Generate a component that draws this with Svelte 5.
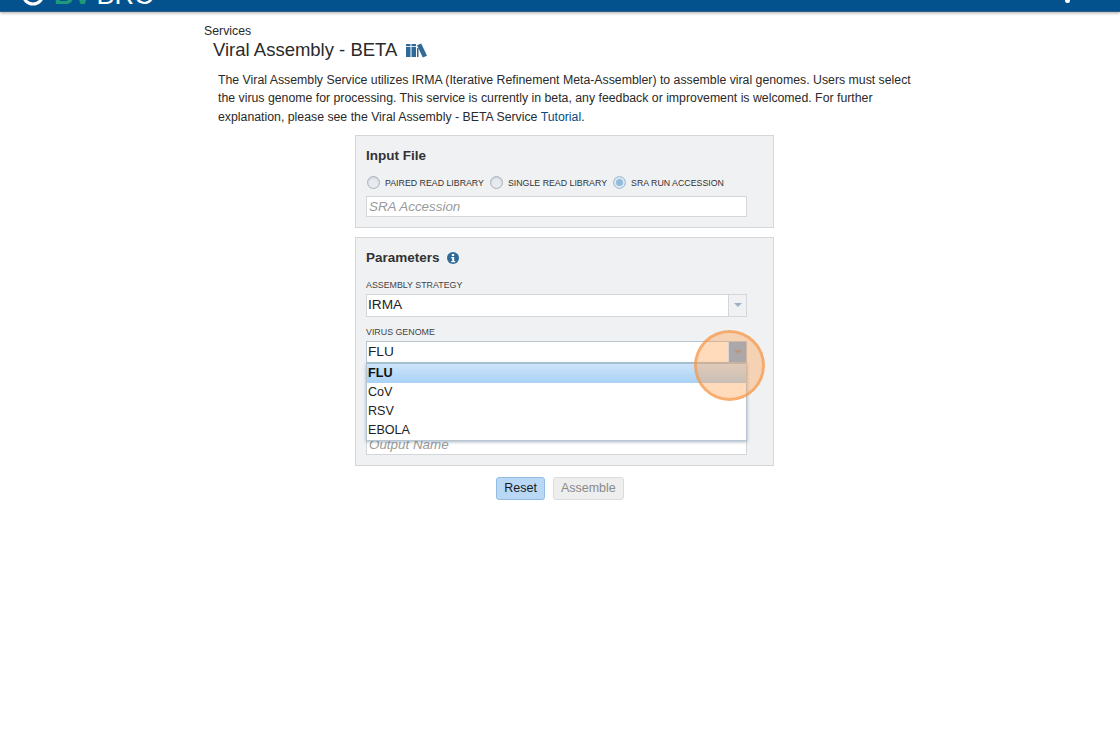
<script lang="ts">
	const radios = [
		{ label: 'PAIRED READ LIBRARY', checked: false },
		{ label: 'SINGLE READ LIBRARY', checked: false },
		{ label: 'SRA RUN ACCESSION', checked: true }
	];
	const genomes = ['FLU', 'CoV', 'RSV', 'EBOLA'];
</script>

<header class="topbar">
	<div class="logo">
		<svg class="logo-mark" width="26" height="26" viewBox="0 0 26 26">
			<circle cx="13" cy="13" r="10" fill="none" stroke="#fff" stroke-width="3" />
		</svg>
		<span class="logo-bv">BV</span>
		<span class="logo-brc">BRC</span>
	</div>
	<span class="user-dot"></span>
</header>

<main class="page">
	<div class="crumb">Services</div>
	<h1>
		Viral Assembly - BETA
		<svg class="books" width="21" height="15" viewBox="0 0 21 15">
			<path d="M0 1h4.500v13H0zM5.500 1H10v13H5.500z" fill="#2f6a98" />
			<path d="M11 2.200l4.200-1.700L21 12.800l-4.200 1.700z" fill="#2f6a98" />
			<path d="M11 5h1.500v9H11z" fill="#2f6a98" />
			<path d="M0 3.500h10" stroke="#fff" stroke-width="0.800" />
		</svg>
	</h1>
	<p class="intro">
		The Viral Assembly Service utilizes IRMA (Iterative Refinement Meta-Assembler) to assemble viral
		genomes. Users must select the virus genome for processing. This service is currently in beta,
		any feedback or improvement is welcomed. For further explanation, please see the Viral Assembly
		- BETA Service <span class="link">Tutorial</span>.
	</p>

	<div class="form">
		<section class="panel input-panel">
			<h2>Input File</h2>
			<div class="radios">
				{#each radios as radio}
					<span class="radio" class:checked={radio.checked}></span>
					<span class="radio-label">{radio.label}</span>
				{/each}
			</div>
			<div class="field placeholder">SRA Accession</div>
		</section>

		<section class="panel params">
			<h2>
				Parameters
				<svg class="info" width="12" height="12" viewBox="0 0 12 12">
					<circle cx="6" cy="6" r="6" fill="#2f6a98" />
					<rect x="4.800" y="2" width="2.400" height="2" fill="#fff" />
					<path d="M4.200 5h3v4h1v1.200H4.200V9h1V6.200h-1z" fill="#fff" />
				</svg>
			</h2>

			<div class="label first">ASSEMBLY STRATEGY</div>
			<div class="select">
				<span class="value">IRMA</span>
				<span class="arrow"><i></i></span>
			</div>

			<div class="label second">VIRUS GENOME</div>
			<div class="select-wrap">
				<div class="select open">
					<span class="value">FLU</span>
					<span class="arrow"><i></i></span>
				</div>
				<ul class="menu">
					{#each genomes as genome, i}
						<li class:active={i === 0}>{genome}</li>
					{/each}
				</ul>
			</div>

			<div class="field placeholder output">Output Name</div>
		</section>

		<div class="actions">
			<button type="button" class="btn primary">Reset</button>
			<button type="button" class="btn disabled">Assemble</button>
		</div>

		<div class="click-spot"></div>
	</div>
</main>

<style>
	:global(body) {
		margin: 0;
		background: #fff;
		font-family: 'Liberation Sans', Arial, sans-serif;
		color: #2a2a2a;
		height: 731px;
		overflow: hidden;
	}

	.topbar {
		height: 11px;
		background: #03528e;
		border-bottom: 1px solid #2c5f86;
		box-shadow: 0 1px 3px rgba(0, 0, 0, 0.35);
		overflow: hidden;
		display: flex;
		justify-content: space-between;
	}

	.logo {
		display: flex;
		align-items: flex-end;
		gap: 5px;
		margin-left: 20px;
		height: 5px;
		font-size: 27px;
		line-height: 20px;
	}

	.logo-mark {
		flex: none;
		margin: 0 3px -2px 0;
	}

	.logo-bv {
		color: #1f9a78;
		font-weight: bold;
	}

	.logo-brc {
		color: #fff;
	}

	.user-dot {
		width: 5px;
		height: 3px;
		background: #fff;
		border-radius: 0 0 3px 3px;
		margin-right: 50px;
	}

	.page {
		padding: 12px 0 0 204px;
		width: 720px;
	}

	.crumb {
		font-size: 12.300px;
		line-height: 15px;
	}

	h1 {
		margin: -1px 0 0 9px;
		font-size: 18.500px;
		font-weight: normal;
		line-height: 24px;
		display: flex;
		align-items: center;
		gap: 9px;
	}

	.intro {
		margin: 8.500px 0 0 14px;
		width: 700px;
		font-size: 12.300px;
		line-height: 18.500px;
	}

	.link {
		color: #0a4a80;
	}

	.form {
		position: relative;
		width: 419px;
		margin: 8.500px 0 0 151px;
	}

	.panel {
		box-sizing: border-box;
		background: #f0f1f3;
		border: 1px solid #d4d6d9;
		padding: 0 26px 0 10px;
	}

	.input-panel {
		height: 93px;
	}

	.params {
		height: 229px;
		margin-top: 9px;
	}

	h2 {
		margin: 0;
		font-size: 13.500px;
		font-weight: bold;
		line-height: 16px;
		color: #333;
		padding-top: 12px;
		display: flex;
		align-items: center;
		gap: 7px;
	}

	.radios {
		display: flex;
		align-items: center;
		margin-top: 12px;
		height: 14px;
	}

	.radio {
		box-sizing: border-box;
		width: 13px;
		height: 13px;
		margin-left: 1px;
		border-radius: 50%;
		border: 1px solid #a9b4bf;
		background: #e7eaee;
		box-shadow: inset 0 1px 2px rgba(0, 0, 0, 0.12);
		flex: none;
	}

	.radio.checked {
		background: #8fbbdc;
		border-color: #a9c0d4;
		box-shadow: inset 0 0 0 2px #dfe7ee;
	}

	.radio-label {
		font-size: 8.800px;
		color: #333;
		margin-left: 5px;
		margin-right: 5px;
		white-space: nowrap;
	}

	.field {
		box-sizing: border-box;
		width: 381px;
		height: 21px;
		background: #fff;
		border: 1px solid #d4d6d9;
		padding-left: 2px;
		font-size: 13.400px;
		line-height: 19px;
		margin-top: 6px;
	}

	.placeholder {
		color: #9a9a9a;
		font-style: italic;
	}

	.output {
		margin-top: 71px;
	}

	.label {
		font-size: 8.850px;
		line-height: 12px;
		color: #444;
	}

	.label.first {
		margin-top: 13px;
	}

	.label.second {
		margin-top: 9px;
	}

	.select {
		box-sizing: border-box;
		display: flex;
		justify-content: space-between;
		width: 381px;
		height: 23px;
		margin-top: 3px;
		background: #fff;
		border: 1px solid #d4d6d9;
	}

	.select.open {
		height: 22px;
		border-color: #b7c4d0;
	}

	.value {
		padding-left: 1px;
		font-size: 13.700px;
		line-height: 20px;
		color: #222;
	}

	.arrow {
		width: 17px;
		background: #f0f1f3;
		border-left: 1px solid #d4d6d9;
		display: flex;
		align-items: center;
		justify-content: center;
	}

	.arrow i {
		width: 0;
		height: 0;
		border-left: 4px solid transparent;
		border-right: 4px solid transparent;
		border-top: 4px solid #9fb0c4;
	}

	.open .arrow {
		position: relative;
		z-index: 2;
		background: #aca7a8;
	}

	.open .arrow i {
		border-top-color: #b8987f;
	}

	.select-wrap {
		position: relative;
	}

	.menu {
		position: absolute;
		top: 22px;
		left: 0;
		box-sizing: border-box;
		width: 381px;
		margin: 0;
		padding: 0;
		list-style: none;
		background: #fff;
		border: 1px solid #b8c6d3;
		border-top: 0;
		box-shadow: 0 1px 3px rgba(60, 90, 120, 0.45);
		font-size: 12.600px;
		line-height: 19px;
		color: #222;
	}

	.menu li {
		padding-left: 1px;
	}

	.menu li.active {
		font-weight: bold;
		border-top: 1px solid #9fc0dc;
		background: linear-gradient(#cde4f8, #a9d2f6);
		color: #111;
	}

	.actions {
		display: flex;
		justify-content: center;
		gap: 8px;
		margin-top: 11px;
		padding-right: 9px;
	}

	.btn {
		box-sizing: border-box;
		height: 23px;
		padding: 0 7px;
		border-radius: 3px;
		font-family: inherit;
		font-size: 12.500px;
		line-height: 19px;
	}

	.primary {
		background: #b9d8f5;
		border: 1px solid #92bce0;
		color: #1a1a1a;
	}

	.disabled {
		background: #eeeeee;
		border: 1px solid #dcdcdc;
		color: #8a8a8a;
	}

	.click-spot {
		position: absolute;
		left: 339px;
		top: 195px;
		box-sizing: border-box;
		width: 71px;
		height: 71px;
		border-radius: 50%;
		background: rgba(255, 160, 80, 0.38);
		border: 3px solid rgba(245, 150, 70, 0.65);
	}
</style>
